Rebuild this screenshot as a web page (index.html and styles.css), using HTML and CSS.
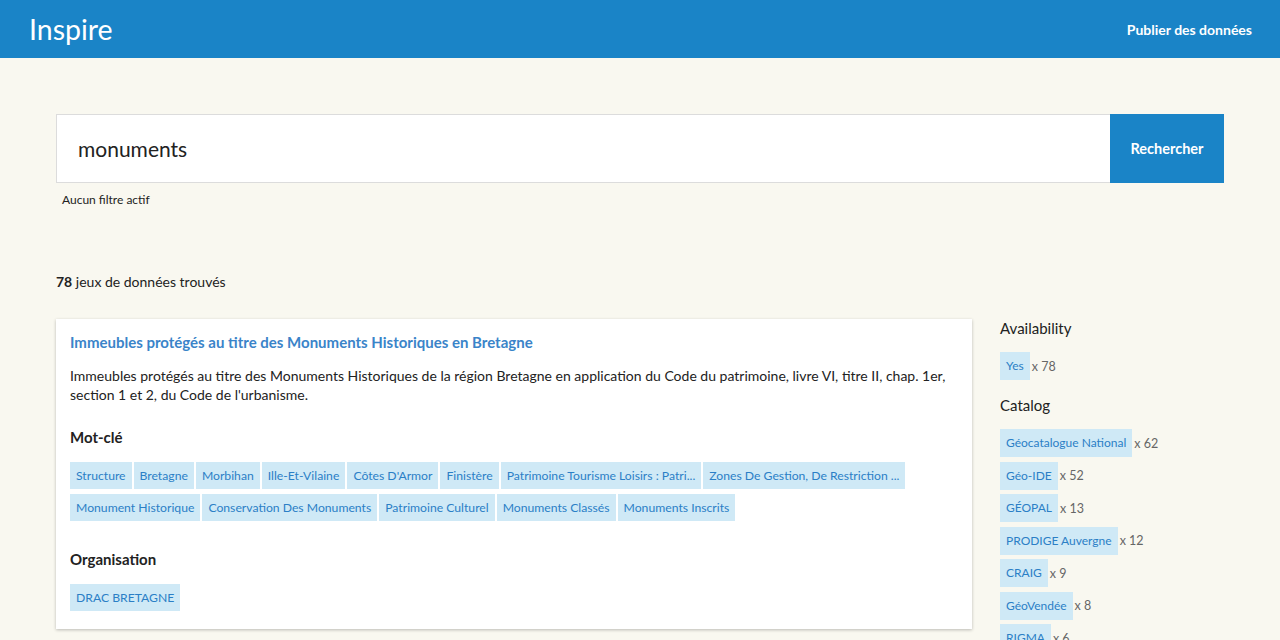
FILE: index.html
```html
<!DOCTYPE html>
<html lang="fr">
<head>
<meta charset="utf-8">
<title>Inspire</title>
<link rel="stylesheet" href="styles.css">
</head>
<body>
<header class="topbar">
  <a class="brand" href="#">Inspire</a>
  <a class="publish" href="#">Publier des données</a>
</header>
<main class="page">
  <form class="search">
    <input class="search-input" type="text" value="monuments">
    <button class="search-btn" type="button">Rechercher</button>
  </form>
  <p class="filters">Aucun filtre actif</p>
  <p class="count"><strong>78</strong> jeux de données trouvés</p>
  <div class="layout">
    <section class="results">
      <article class="card">
        <h2 class="card-title"><a href="#">Immeubles protégés au titre des Monuments Historiques en Bretagne</a></h2>
        <p class="card-desc">Immeubles protégés au titre des Monuments Historiques de la région Bretagne en application du Code du patrimoine, livre VI, titre II, chap. 1er, section 1 et 2, du Code de l'urbanisme.</p>
        <h3 class="card-label">Mot-clé</h3>
        <div class="tags">
          <span class="tag">Structure</span>
          <span class="tag">Bretagne</span>
          <span class="tag">Morbihan</span>
          <span class="tag">Ille-Et-Vilaine</span>
          <span class="tag">Côtes D'Armor</span>
          <span class="tag">Finistère</span>
          <span class="tag">Patrimoine Tourisme Loisirs : Patri...</span>
          <span class="tag">Zones De Gestion, De Restriction ...</span>
          <span class="tag">Monument Historique</span>
          <span class="tag">Conservation Des Monuments</span>
          <span class="tag">Patrimoine Culturel</span>
          <span class="tag">Monuments Classés</span>
          <span class="tag">Monuments Inscrits</span>
        </div>
        <h3 class="card-label org-label">Organisation</h3>
        <div class="tags">
          <span class="tag">DRAC BRETAGNE</span>
        </div>
      </article>
    </section>
    <aside class="facets">
      <h4 class="facet-title">Availability</h4>
      <ul class="facet-list">
        <li><span class="tag">Yes</span><span class="num">x 78</span></li>
      </ul>
      <h4 class="facet-title">Catalog</h4>
      <ul class="facet-list">
        <li><span class="tag">Géocatalogue National</span><span class="num">x 62</span></li>
        <li><span class="tag">Géo-IDE</span><span class="num">x 52</span></li>
        <li><span class="tag">GÉOPAL</span><span class="num">x 13</span></li>
        <li><span class="tag">PRODIGE Auvergne</span><span class="num">x 12</span></li>
        <li><span class="tag">CRAIG</span><span class="num">x 9</span></li>
        <li><span class="tag">GéoVendée</span><span class="num">x 8</span></li>
        <li><span class="tag">RIGMA</span><span class="num">x 6</span></li>
      </ul>
    </aside>
  </div>
</main>
</body>
</html>
```
FILE: styles.css
```css
* { box-sizing: border-box; }
html, body { margin: 0; padding: 0; }
body {
  background: #f9f8f0;
  font-family: Lato, "Open Sans", sans-serif;
  color: #222;
}
a { text-decoration: none; }

.topbar {
  height: 58px;
  background: #1a84c7;
  display: flex;
  align-items: center;
  justify-content: space-between;
  padding: 0 28px 0 29px;
}
.brand {
  color: #fff;
  font-size: 28.5px;
  font-weight: 400;
}
.publish {
  color: #fff;
  font-size: 14px;
  font-weight: 700;
}

.page {
  padding: 56px 56px 0 56px;
}
.search {
  display: flex;
  height: 69px;
  margin: 0;
}
.search-input {
  flex: 1;
  border: 1px solid #dcdcdc;
  border-right: none;
  background: #fff;
  font-family: Lato, sans-serif;
  font-size: 21px;
  color: #222;
  padding: 0 21px;
  outline: none;
}
.search-btn {
  width: 114px;
  border: none;
  background: #1a84c7;
  color: #fff;
  font-family: Lato, sans-serif;
  font-size: 14.5px;
  font-weight: 700;
  cursor: pointer;
}
.filters {
  margin: 9px 0 0 6px;
  font-size: 12px;
  line-height: 16px;
}
.count {
  margin: 65px 0 0 0;
  font-size: 14px;
  line-height: 18px;
}
.count strong { font-weight: 700; }

.layout {
  display: flex;
  gap: 28px;
  margin-top: 28px;
  align-items: flex-start;
}
.results { width: 916px; flex: none; }
.card {
  background: #fff;
  box-shadow: 0 1px 3px rgba(0,0,0,0.25);
  padding: 14px 14px 18px 14px;
}
.card-title {
  margin: 0;
  font-size: 15px;
  line-height: 18px;
  font-weight: 700;
}
.card-title a { color: #3a84c9; }
.card-desc {
  margin: 15px 0 0 0;
  font-size: 14px;
  line-height: 19px;
  color: #222;
}
.card-label {
  margin: 24px 0 0 0;
  font-size: 15px;
  line-height: 18px;
  font-weight: 700;
  color: #222;
}
.org-label { margin-top: 29px; }
.tags {
  display: flex;
  flex-wrap: wrap;
  gap: 5px 2px;
  margin-top: 16px;
}
.tag {
  display: inline-block;
  background: #cfe9f6;
  color: #2b7fc6;
  font-size: 12.2px;
  line-height: 15px;
  padding: 6px 6px;
}

.facets { width: 224px; flex: none; }
.facet-title {
  margin: 0;
  font-size: 15px;
  line-height: 18px;
  font-weight: 400;
  color: #222;
}
.facet-list {
  list-style: none;
  margin: 15px 0 16px 0;
  padding: 0;
  display: flex;
  flex-direction: column;
  gap: 4.5px;
}
.facet-list li {
  display: flex;
  align-items: center;
}
.facet-list .tag {
  font-size: 12px;
  line-height: 16px;
}
.num {
  margin-left: 2px;
  font-size: 12.5px;
  color: #666;
}
```
